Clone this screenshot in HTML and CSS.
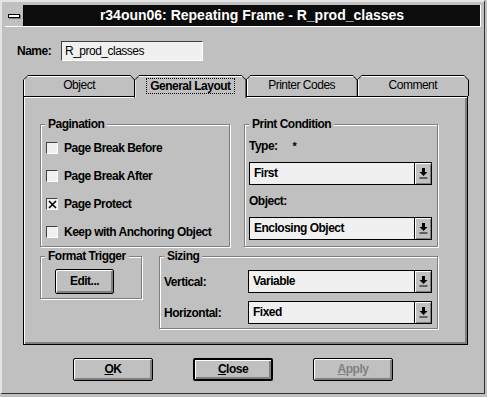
FILE: index.html
```html
<!DOCTYPE html>
<html lang="en">
<head>
    <meta charset="UTF-8">
    <title>Repeating Frame - R_prod_classes</title>
    <link rel="stylesheet" href="styles.css">
</head>
<body>
    <div class="window">
        <div class="titlebar">
            <div class="sysmenu"><span></span></div>
            <div class="title">r34oun06: Repeating Frame - R_prod_classes</div>
        </div>

        <div class="name-row">
            <label>Name:</label>
            <div class="textbox">R_prod_classes</div>
        </div>

        <div class="tabs">
            <div class="tab"><span>Object</span></div>
            <div class="tab active"><span><em>General Layout</em></span></div>
            <div class="tab"><span>Printer Codes</span></div>
            <div class="tab"><span>Comment</span></div>
        </div>

        <div class="panel">
            <div class="row">
                <fieldset class="group pagination">
                    <legend>Pagination</legend>
                    <div class="check"><i class="box"></i>Page Break Before</div>
                    <div class="check"><i class="box"></i>Page Break After</div>
                    <div class="check">
                        <i class="box">
                            <svg width="9" height="9" viewBox="0 0 9 9"><path d="M1 1L8 8M8 1L1 8" stroke="#000" stroke-width="1.6"/></svg>
                        </i>Page Protect
                    </div>
                    <div class="check"><i class="box"></i>Keep with Anchoring Object</div>
                </fieldset>

                <fieldset class="group condition">
                    <legend>Print Condition</legend>
                    <div class="field-label">Type: <span class="star">*</span></div>
                    <div class="combo"><span>First</span><b class="arrow"><svg width="9" height="11" viewBox="0 0 9 11"><path d="M3 0h3v4h2.5L4.5 8 0.5 4H3z" fill="#000"/><path d="M0.5 10h8" stroke="#000"/></svg></b></div>
                    <div class="field-label second">Object:</div>
                    <div class="combo"><span>Enclosing Object</span><b class="arrow"><svg width="9" height="11" viewBox="0 0 9 11"><path d="M3 0h3v4h2.5L4.5 8 0.5 4H3z" fill="#000"/><path d="M0.5 10h8" stroke="#000"/></svg></b></div>
                </fieldset>
            </div>

            <div class="row second-row">
                <fieldset class="group trigger">
                    <legend>Format Trigger</legend>
                    <div class="btn edit">Edit...</div>
                </fieldset>

                <fieldset class="group sizing">
                    <legend>Sizing</legend>
                    <div class="size-row">
                        <label>Vertical:</label>
                        <div class="combo"><span>Variable</span><b class="arrow"><svg width="9" height="11" viewBox="0 0 9 11"><path d="M3 0h3v4h2.5L4.5 8 0.5 4H3z" fill="#000"/><path d="M0.5 10h8" stroke="#000"/></svg></b></div>
                    </div>
                    <div class="size-row">
                        <label>Horizontal:</label>
                        <div class="combo"><span>Fixed</span><b class="arrow"><svg width="9" height="11" viewBox="0 0 9 11"><path d="M3 0h3v4h2.5L4.5 8 0.5 4H3z" fill="#000"/><path d="M0.5 10h8" stroke="#000"/></svg></b></div>
                    </div>
                </fieldset>
            </div>
        </div>

        <div class="buttons">
            <div class="btn"><u>O</u>K</div>
            <div class="btn default"><u>C</u>lose</div>
            <div class="btn disabled"><u>A</u>pply</div>
        </div>
    </div>
</body>
</html>
```

FILE: styles.css
```css
* {
    margin: 0;
    padding: 0;
    box-sizing: border-box;
}

body {
    background-color: #c0c0c0;
    font-family: 'Liberation Sans', Arial, sans-serif;
    font-size: 12px;
    letter-spacing: -0.5px;
    white-space: nowrap;
    color: #000;
}

.window {
    width: 485px;
    height: 394px;
    background-color: #c0c0c0;
    border-left: 2px solid #e4e4e4;
    border-top: 2px solid #e4e4e4;
    border-right: 1px solid #303030;
    border-bottom: 1px solid #303030;
}

/* title bar */
.titlebar {
    display: flex;
    height: 22px;
    margin: 3px 3px 0;
    border-right: 1px solid #fff;
    border-bottom: 1px solid #fff;
    background-color: #0c0c0c;
}

.sysmenu {
    width: 19px;
    background-color: #c0c0c0;
    border-right: 1px solid #000;
    display: flex;
    align-items: center;
    justify-content: center;
}

.sysmenu span {
    width: 12px;
    height: 4px;
    background-color: #fff;
    border: 1px solid #000;
    box-shadow: 1px 1px 0 #808080;
}

.title {
    flex: 1;
    text-align: center;
    color: #fff;
    font-weight: bold;
    font-size: 14px;
    letter-spacing: 0;
    line-height: 21px;
}

/* name field */
.name-row {
    display: flex;
    align-items: center;
    margin: 14px 0 0 15px;
}

.name-row label {
    font-weight: bold;
    width: 44px;
}

.textbox {
    width: 142px;
    height: 20px;
    padding-left: 3px;
    line-height: 18px;
    background-color: #f0f0f0;
    border: 1px solid;
    border-color: #404040 #fff #fff #404040;
}

/* tabs */
.tabs {
    display: flex;
    width: 445px;
    margin: 14px 0 0 21px;
    position: relative;
    z-index: 1;
}

.tab {
    flex: 1;
    height: 21px;
    margin-right: -1px;
    padding: 1px 1px 0;
    background-color: #000;
    clip-path: polygon(0 5px, 5px 0, calc(100% - 5px) 0, 100% 5px, 100% 100%, 0 100%);
    text-align: center;
}

.tab span {
    display: block;
    height: 100%;
    line-height: 19px;
    background-color: #c0c0c0;
    box-shadow: inset 1px 1px #fff;
    clip-path: polygon(0 4px, 4px 0, calc(100% - 4px) 0, 100% 4px, 100% 100%, 0 100%);
}

.tab.active {
    height: 23px;
    margin-bottom: -2px;
    padding-bottom: 0;
}

.tab.active span {
    padding-top: 3px;
    line-height: 15px;
}

.tab.active em {
    font-style: normal;
    font-weight: bold;
    padding: 0 3px;
    outline: 1px dotted #000;
    outline-offset: 0;
}

/* panel */
.panel {
    width: 445px;
    height: 249px;
    margin-left: 21px;
    padding: 20px 0 0 16px;
    border: 1px solid #000;
    box-shadow: inset 1px 1px #fff, inset -2px -2px #808080;
}

.row {
    display: flex;
    gap: 14px;
}

.second-row {
    gap: 17px;
    margin-top: 2px;
    align-items: flex-start;
}

.group {
    min-width: 0;
    border: 1px solid #808080;
    box-shadow: inset 1px 1px #fff, 1px 1px 0 #fff;
    font-weight: bold;
}

.group legend {
    padding: 0 3px;
    line-height: 14px;
    background-color: #c0c0c0;
}

.pagination {
    width: 190px;
    padding: 3px 0 0 5px;
}

.pagination legend {
    margin-left: -1px;
}

.condition {
    width: 194px;
    padding: 0 5px 4px 4px;
}

.trigger {
    width: 102px;
    padding: 6px 0 4px 0;
}

.trigger legend {
    margin-left: 4px;
}

.trigger .btn {
    margin-left: 14px;
}

.sizing {
    width: 279px;
    padding: 7px 5px 4px 4px;
}

/* checkboxes */
.check {
    display: flex;
    align-items: center;
    height: 28px;
}

.box {
    width: 12px;
    height: 12px;
    margin-right: 6px;
    background-color: #f0f0f0;
    border: 1px solid;
    border-color: #404040 #fff #fff #404040;
    display: flex;
    align-items: center;
    justify-content: center;
}

/* labels and combos */
.field-label {
    margin-top: 7px;
    line-height: 16px;
}

.field-label.second {
    margin-top: 8px;
}

.star {
    margin-left: 12px;
    font-size: 11px;
}

.combo {
    display: flex;
    height: 23px;
    margin-top: 8px;
    background-color: #f0f0f0;
    border: 1px solid #000;
}

.combo span {
    flex: 1;
    padding-left: 4px;
    line-height: 21px;
}

.arrow {
    width: 17px;
    border-left: 1px solid #000;
    background-color: #c0c0c0;
    box-shadow: inset 1px 1px #fff, inset -1px -1px #808080;
    display: flex;
    align-items: center;
    justify-content: center;
}

.size-row {
    display: flex;
    align-items: center;
}

.size-row + .size-row {
    margin-top: 8px;
}

.size-row label {
    width: 84px;
}

.size-row .combo {
    width: 184px;
    margin-top: 0;
}

/* push buttons */
.btn {
    width: 80px;
    height: 23px;
    line-height: 21px;
    text-align: center;
    font-weight: bold;
    border: 1px solid #000;
    border-radius: 2px;
    background-color: #c0c0c0;
    box-shadow: inset 1px 1px #fff, inset -2px -2px #808080;
}

.btn.edit {
    width: 59px;
    height: 25px;
    line-height: 23px;
}

.btn.default {
    border-width: 2px;
    line-height: 19px;
}

.btn.disabled {
    color: #808080;
}

.buttons {
    display: flex;
    gap: 40px;
    margin: 13px 0 0 71px;
}
```
